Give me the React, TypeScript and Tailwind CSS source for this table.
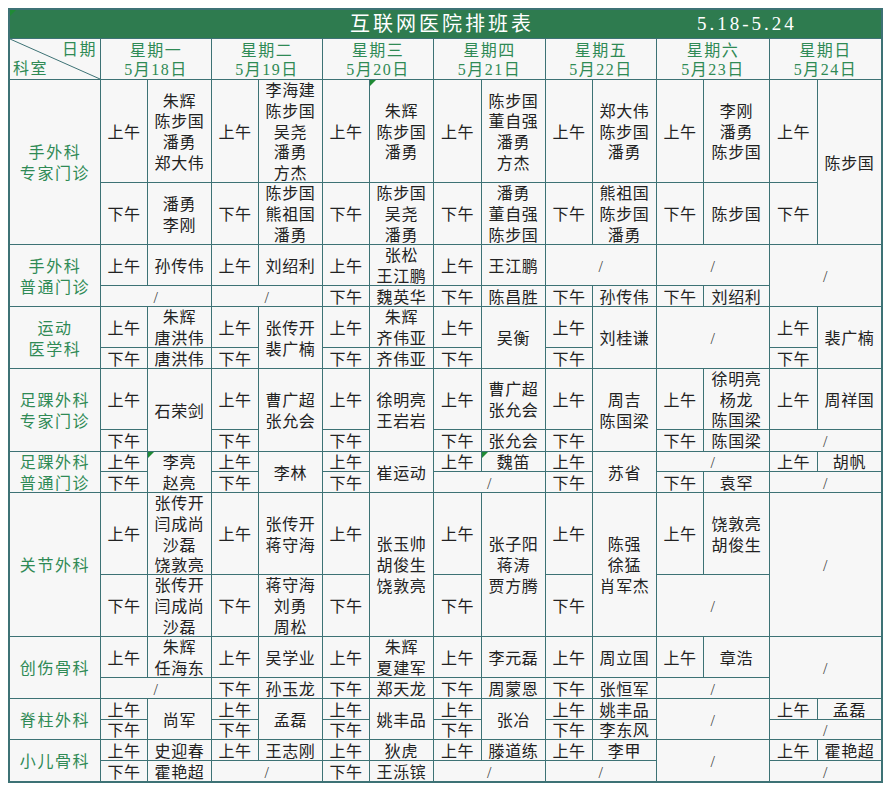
import { Fragment } from 'react'

// Weekly duty roster (互联网医院排班表) laid out as an Excel-like grid.
// Cells are listed in reading order; grid auto-placement fills the spans like a <table>.

type Span = 'c2' | 'r2' | 'c2r2'
interface Cell {
  k: 'l' | 'n' | 's' // label / names / slash
  t?: string[]
  span?: Span
  note?: boolean // little green comment marker
}

const SPAN: Record<Span, string> = {
  c2: 'col-span-2',
  r2: 'row-span-2',
  c2r2: 'col-span-2 row-span-2',
}

const A: Cell = { k: 'l', t: ['上午'] }
const P: Cell = { k: 'l', t: ['下午'] }
const n = (s: string, span?: Span, note?: boolean): Cell => ({ k: 'n', t: s.split('/'), span, note })
const sl = (span: Span): Cell => ({ k: 's', span })

const DAYS = [
  ['星期一', '5月18日'],
  ['星期二', '5月19日'],
  ['星期三', '5月20日'],
  ['星期四', '5月21日'],
  ['星期五', '5月22日'],
  ['星期六', '5月23日'],
  ['星期日', '5月24日'],
]

const DEPTS: { name: string[]; am: Cell[]; pm: Cell[] }[] = [
  {
    name: ['手外科', '专家门诊'],
    am: [A, n('朱辉/陈步国/潘勇/郑大伟'), A, n('李海建/陈步国/吴尧/潘勇/方杰'), A, n('朱辉/陈步国/潘勇', undefined, true), A, n('陈步国/董自强/潘勇/方杰'), A, n('郑大伟/陈步国/潘勇'), A, n('李刚/潘勇/陈步国'), A, n('陈步国', 'r2')],
    pm: [P, n('潘勇/李刚'), P, n('陈步国/熊祖国/潘勇'), P, n('陈步国/吴尧/潘勇'), P, n('潘勇/董自强/陈步国'), P, n('熊祖国/陈步国/潘勇'), P, n('陈步国'), P],
  },
  {
    name: ['手外科', '普通门诊'],
    am: [A, n('孙传伟'), A, n('刘绍利'), A, n('张松/王江鹏'), A, n('王江鹏'), sl('c2'), sl('c2'), sl('c2r2')],
    pm: [sl('c2'), sl('c2'), P, n('魏英华'), P, n('陈昌胜'), P, n('孙传伟'), P, n('刘绍利')],
  },
  {
    name: ['运动', '医学科'],
    am: [A, n('朱辉/唐洪伟'), A, n('张传开/裴广楠', 'r2'), A, n('朱辉/齐伟亚'), A, n('吴衡', 'r2'), A, n('刘桂谦', 'r2'), sl('c2r2'), A, n('裴广楠', 'r2')],
    pm: [P, n('唐洪伟'), P, P, n('齐伟亚'), P, P, P],
  },
  {
    name: ['足踝外科', '专家门诊'],
    am: [A, n('石荣剑', 'r2'), A, n('曹广超/张允会', 'r2'), A, n('徐明亮/王岩岩', 'r2'), A, n('曹广超/张允会'), A, n('周吉/陈国梁', 'r2'), A, n('徐明亮/杨龙/陈国梁'), A, n('周祥国')],
    pm: [P, P, P, P, n('张允会'), P, P, n('陈国梁'), sl('c2')],
  },
  {
    name: ['足踝外科', '普通门诊'],
    am: [A, n('李亮/赵亮', 'r2', true), A, n('李林', 'r2'), A, n('崔运动', 'r2'), A, n('魏笛', undefined, true), A, n('苏省', 'r2'), sl('c2'), A, n('胡帆')],
    pm: [P, P, P, sl('c2'), P, P, n('袁罕'), sl('c2')],
  },
  {
    name: ['关节外科'],
    am: [A, n('张传开/闫成尚/沙磊/饶敦亮'), A, n('张传开/蒋守海'), A, n('张玉帅/胡俊生/饶敦亮', 'r2'), A, n('张子阳/蒋涛/贾方腾', 'r2'), A, n('陈强/徐猛/肖军杰', 'r2'), A, n('饶敦亮/胡俊生'), sl('c2r2')],
    pm: [P, n('张传开/闫成尚/沙磊'), P, n('蒋守海/刘勇/周松'), P, P, P, sl('c2')],
  },
  {
    name: ['创伤骨科'],
    am: [A, n('朱辉/任海东'), A, n('吴学业'), A, n('朱辉/夏建军'), A, n('李元磊'), A, n('周立国'), A, n('章浩'), sl('c2r2')],
    pm: [sl('c2'), P, n('孙玉龙'), P, n('郑天龙'), P, n('周蒙恩'), P, n('张恒军'), sl('c2')],
  },
  {
    name: ['脊柱外科'],
    am: [A, n('尚军', 'r2'), A, n('孟磊', 'r2'), A, n('姚丰品', 'r2'), A, n('张冶', 'r2'), A, n('姚丰品'), sl('c2r2'), A, n('孟磊')],
    pm: [P, P, P, P, P, n('李东风'), sl('c2')],
  },
  {
    name: ['小儿骨科'],
    am: [A, n('史迎春'), A, n('王志刚'), A, n('狄虎'), A, n('滕道练'), A, n('李甲'), sl('c2r2'), A, n('霍艳超')],
    pm: [P, n('霍艳超'), sl('c2'), P, n('王泺镔'), sl('c2'), sl('c2'), sl('c2')],
  },
]

function Note() {
  return <span className="absolute left-0 top-0 h-0 w-0 border-r-[6px] border-t-[6px] border-r-transparent border-t-[#1f8a35]" />
}

function CellBox({ c }: { c: Cell }) {
  return (
    <div
      className={`relative flex flex-col items-center justify-center overflow-hidden bg-[#f7f7f7] pt-[4px] text-[16px] leading-[20.7px] text-[#222] ${
        c.k === 'n' ? 'tracking-[0.7px]' : 'tracking-[0.5px]'
      } ${c.span ? SPAN[c.span] : ''}`}
    >
      {c.note && <Note />}
      {c.k === 's' ? (
        <span className="text-[#444]">/</span>
      ) : (
        c.t!.map((line, i) => (
          <span key={i} className="shrink-0 whitespace-nowrap">
            {line}
          </span>
        ))
      )}
    </div>
  )
}

export default function App() {
  return (
    <div className="min-h-[790px] w-[890px] bg-white pl-[8px] pt-[8px] font-['Liberation_Serif','Noto_Sans_CJK_SC',serif]">
      <div className="grid w-fit grid-cols-[90px_46px_63px_46px_63px_46px_63px_47px_63px_46px_63px_46px_65px_47px_63px] grid-rows-[28px_40px_102px_61px_40px_20px_40px_20px_60px_21px_19px_20px_81px_61px_40px_20px_20px_19px_20px_20px] gap-px bg-[#3d7275] p-[2px]">
        {/* Title */}
        <div className="relative col-span-full flex items-center bg-[#2e7b4f] pl-[340px] text-white">
          <Note />
          <span className="text-[20px] tracking-[3px]">互联网医院排班表</span>
          <span className="ml-[163px] text-[19px] tracking-[3px]">5.18-5.24</span>
        </div>

        {/* Corner: 日期 / 科室 */}
        <div className="relative flex flex-col justify-between bg-[#f7f7f7] px-[3px] py-[1px] text-[16px] leading-[19px] tracking-[1.5px] text-[#2f8a55]">
          <svg className="absolute inset-0 h-full w-full" preserveAspectRatio="none" viewBox="0 0 90 40">
            <line x1="0" y1="0" x2="90" y2="40" stroke="#3d7275" strokeWidth="1" />
          </svg>
          <span className="self-end">日期</span>
          <span className="self-start">科室</span>
        </div>

        {DAYS.map(([wd, date]) => (
          <div
            key={wd}
            className="col-span-2 flex flex-col items-center justify-center bg-[#f7f7f7] pt-[2px] text-[16px] leading-[19px] tracking-[1.5px] text-[#2f8a55]"
          >
            <span>{wd}</span>
            <span>{date}</span>
          </div>
        ))}

        {DEPTS.map((d) => (
          <Fragment key={d.name.join('')}>
            <div className="row-span-2 flex flex-col items-center justify-center overflow-hidden bg-[#f7f7f7] pt-[4px] text-[16px] leading-[20.7px] tracking-[1.6px] text-[#2f8a55]">
              {d.name.map((line) => (
                <span key={line}>{line}</span>
              ))}
            </div>
            {d.am.map((c, i) => (
              <CellBox key={`a${i}`} c={c} />
            ))}
            {d.pm.map((c, i) => (
              <CellBox key={`p${i}`} c={c} />
            ))}
          </Fragment>
        ))}
      </div>
    </div>
  )
}
